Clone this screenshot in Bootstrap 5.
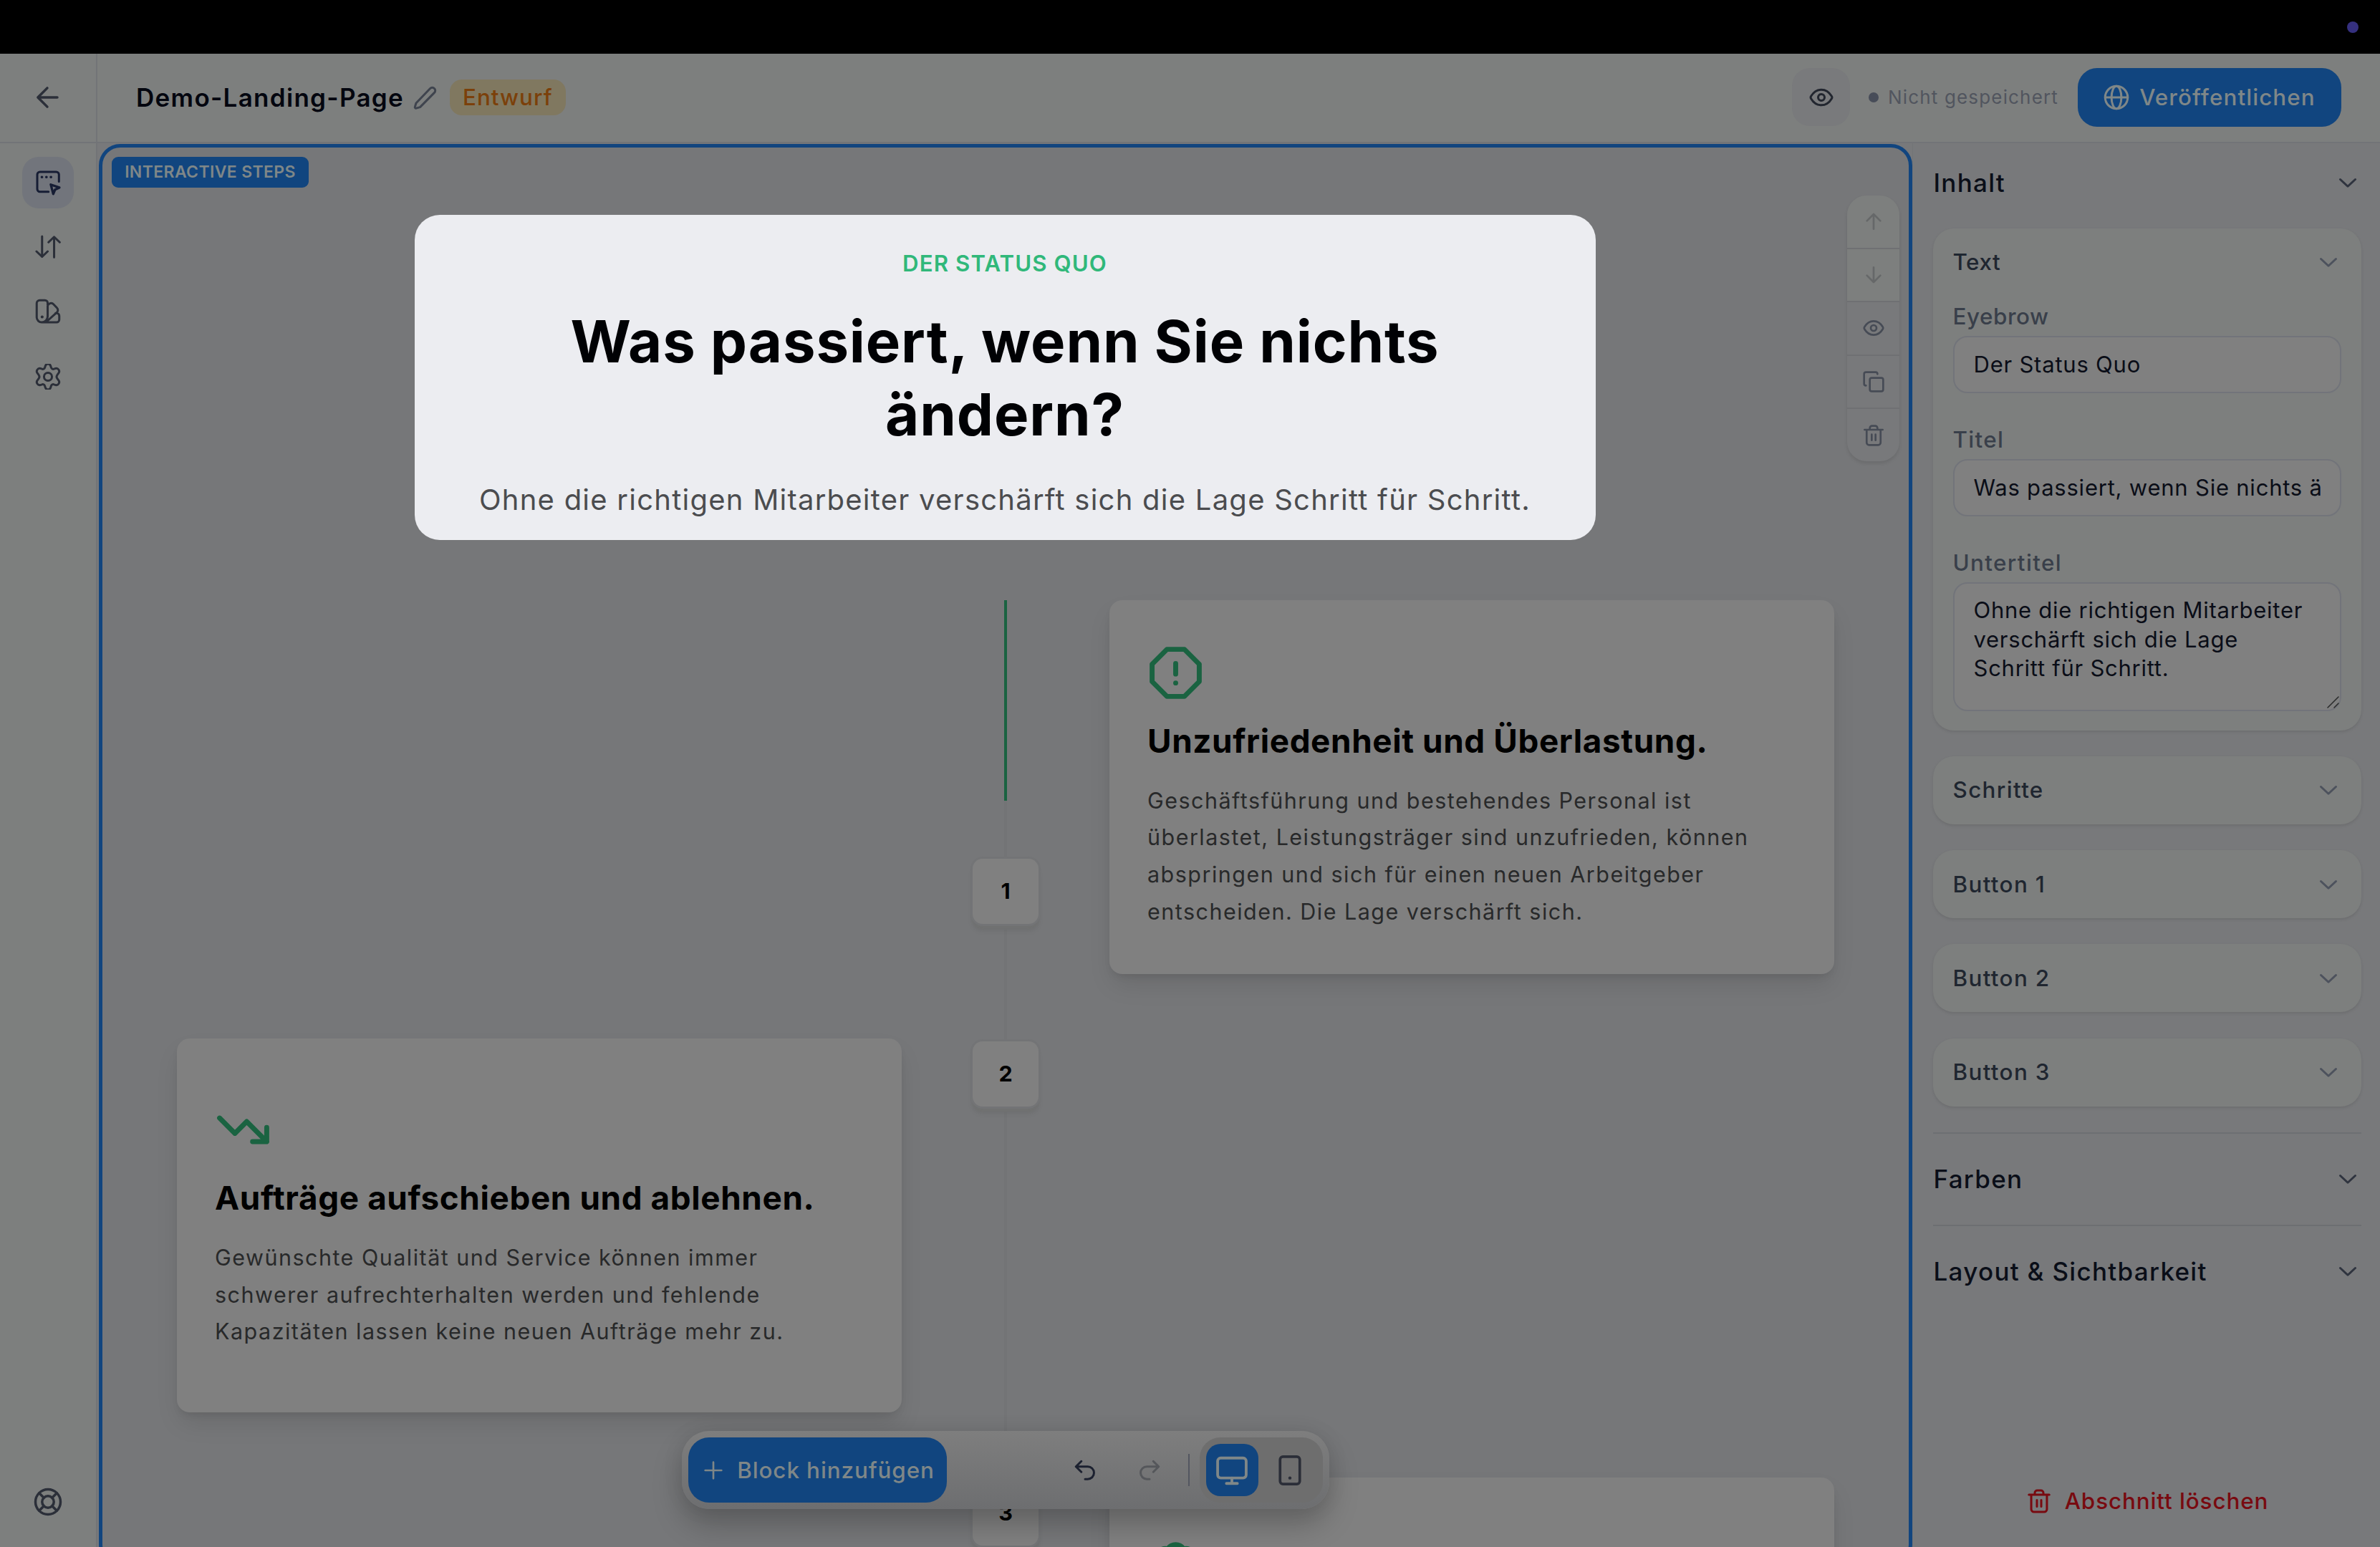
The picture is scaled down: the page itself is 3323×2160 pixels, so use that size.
<!DOCTYPE html>
<html lang="de">
<head>
<meta charset="utf-8">
<meta name="viewport" content="width=device-width, initial-scale=1">
<title>Demo-Landing-Page</title>
<link href="https://cdn.jsdelivr.net/npm/bootstrap@5.3.0/dist/css/bootstrap.min.css" rel="stylesheet">
<script src="https://cdn.jsdelivr.net/npm/bootstrap@5.3.0/dist/js/bootstrap.bundle.min.js"></script>
<style>
  :root { --surface:#7d7f7e; --panel:#78797b; --stage:#767779; --edge:#727477; --blue:#11457f; --green:#1a6341; --on-blue:#7f8788; --ink:#2b2f39; }
  body { font-family:Inter,"Liberation Sans",sans-serif; height:2160px; width:3323px; background:var(--surface); color:#0a0d16; font-size:31.4px; line-height:40px; letter-spacing:1.2px; }
  svg { display:block; flex:none; fill:none; stroke:currentColor; stroke-width:2; stroke-linecap:round; stroke-linejoin:round; }
  .s31 { width:32px; height:32px; } .s36 { width:36px; height:36px; } .s42 { width:42px; height:42px; } .s79 { width:79px; height:79px; stroke-width:2.1; }
  .strip { height:75px; background:#000; padding-right:30px; }
  .strip i { width:16px; height:16px; border-radius:50%; background:#35307f; }
  .topbar { height:125px; border-bottom:2px solid var(--edge); }
  .topbar > :not(.backcell) { margin-bottom:2px; }
  .backcell, .rail { width:136px; border-right:2px solid var(--edge); color:var(--ink); }
  .backcell { padding:0 2px 2px 0; }
  .rail { padding:19px 1px 42px 0; gap:18.2px; }
  .railbtn { width:72px; height:72px; border-radius:23px; }
  .railbtn.on { background:#72757c; color:#161d34; }
  .pagetitle { font-size:35px; font-weight:600; letter-spacing:1.3px; color:#04060f; margin:0 12px 0 54px; }
  .draft { height:50px; line-height:50px; padding:0 18px; border-radius:17px; background:#807860; color:#7b400a; font-weight:530; letter-spacing:1px; margin-left:16px; }
  .eyebtn { width:81px; height:81px; border-radius:25px; background:#797a7c; color:#22262f; }
  .unsaved { font-size:26px; color:#51555e; margin:0 27px 0 26px; gap:13px; letter-spacing:1.16px; }
  .unsaved i { width:14px; height:14px; border-radius:50%; background:#474c58; }
  .bluebtn { background:var(--blue); color:var(--on-blue); font-weight:530; border-radius:27px; }
  .publish { width:368px; height:82px; margin-right:54px; gap:14px; letter-spacing:1.08px; }
  .stage { width:2534px; padding:1px 0 0 2px; background:var(--panel); }
  .frame { width:2532px; height:1985px; border:5px solid var(--blue); border-radius:30px; background:var(--stage); padding-top:93.5px; }
  .blocktag { left:13px; top:13px; width:275px; height:43px; line-height:43px; border-radius:9px; background:var(--blue); color:var(--on-blue); font-size:23px; font-weight:600; letter-spacing:.36px; }
  .spot { width:1649px; height:454px; border-radius:35px; background:#ecedf1; padding-top:48px; color:#000104; position:relative; left:-1px; }
  .spot-eyebrow { color:#30b87a; font-size:31.2px; font-weight:600; letter-spacing:1.1px; }
  .spot h1 { font-size:81.4px; line-height:101.7px; font-weight:700; letter-spacing:.87px; margin:38.5px 0 38.5px; }
  .spot p { font-size:40px; line-height:60px; color:#4b4c4f; letter-spacing:1.24px; margin:0; }
  .steps { display:grid; grid-template-columns:1012px 290px 1012px; grid-auto-rows:522px; row-gap:90.4px; justify-content:center; margin-top:84.5px; }
  .rope { grid-column:2; grid-row:1 / span 3; width:4px; justify-self:center; background:linear-gradient(var(--green) 280px,#737476 280px); }
  .c1 { grid-column:1; } .c2 { grid-column:2; } .c3 { grid-column:3; } .r1 { grid-row:1; } .r2 { grid-row:2; } .r3 { grid-row:3; }
  .stepcard { background:#808080; border-radius:18px; padding:0 53px; box-shadow:0 18px 34px -4px rgba(0,0,0,.1),0 6px 12px -4px rgba(0,0,0,.1); color:var(--green); }
  .stepcard h2 { font-size:45.8px; line-height:60px; font-weight:700; letter-spacing:.62px; color:#000; margin:26px 0 27px; }
  .stepcard p { font-size:30.5px; line-height:51.7px; letter-spacing:1.48px; color:#28292a; margin:0; white-space:nowrap; }
  .num { width:92px; height:91px; line-height:90px; border-radius:14px; background:#808080; justify-self:center; font-size:30.5px; font-weight:700; color:#000; letter-spacing:0; box-shadow:0 0 0 3px #737476,0 7px 3px 1px #707171,0 10px 8px rgba(0,0,0,.06); margin:4px 0 0; }
  .num.r1 { margin-top:360.5px; }
  .tools { right:13px; top:67px; width:73px; height:371px; border-radius:27px; overflow:hidden; box-shadow:0 3px 5px rgba(0,0,0,.1); background:#78797b; color:#464b55; }
  .tools > span { height:74.5px; border-bottom:2px solid #6f7073; }
  .tools > span:last-child { border:0; height:73px; }
  .tools .off { background:var(--surface); color:#666869; }
  .dock { left:809px; top:1792px; width:904px; height:109px; border-radius:38px; padding:9px; background:linear-gradient(#7e7e7e,#6d6e70); box-shadow:0 22px 42px rgba(0,0,0,.22),0 0 30px rgba(0,0,0,.07); }
  .addblock { width:361px; height:91px; border-radius:29px; letter-spacing:.9px; gap:17px; padding-left:2px; }
  .dock .rule { width:2px; height:45px; background:#535660; }
  .seg { width:172px; height:91px; border-radius:29px; background:#6e6e6e; padding-left:8.5px; margin-left:14px; color:#2b2e38; }
  .seg .on { width:73px; height:73px; border-radius:20px; background:var(--blue); color:var(--on-blue); margin-right:22px; }
  .side { width:653px; background:var(--panel); padding:0 26.5px 44px 27.5px; border-left:1px solid var(--edge); }
  .sec { font-size:35px; font-weight:530; letter-spacing:1.3px; height:128.7px; color:#0a0e18; padding-left:1px; }
  .sec svg { color:#2f343f; margin-right:1px; }
  .sec.first { height:109.500px; margin-bottom:9px; }
  .rule-top { border-top:2px solid #6d6f72; }
  .fold { background:var(--surface); border-radius:29px; box-shadow:0 2px 4px rgba(0,0,0,.1); margin-bottom:36.3px; padding:0 28px; color:#1f2630; }
  .foldhead { height:95px; font-weight:530; letter-spacing:1.35px; }
  .foldhead svg { color:#4d525d; }
  .flabel { font-weight:530; color:#393f4a; height:40px; margin-bottom:7px; letter-spacing:1.35px; display:block; }
  .tight { letter-spacing:.55px; }
  .side .form-control { background:#808080; border:2px solid #72747a; border-radius:20px; height:80px; padding:0 27px; font-size:31px; line-height:40.7px; letter-spacing:.78px; color:#0a0d17; margin-bottom:45px; }
  .side textarea.form-control { height:180px; padding-top:17.5px; padding-right:45px; resize:none; overflow:hidden; margin-bottom:0; letter-spacing:.74px; }
  .grip { right:2px; bottom:3px; width:20px; height:20px; stroke-width:1.6; color:#2c2d2e; }
  .remove { color:#780a10; font-weight:530; letter-spacing:.9px; gap:18px; padding-left:1px; }
</style>
</head>
<body class="d-flex flex-column overflow-hidden">
  <svg width="0" height="0" class="position-absolute">
    <symbol id="chev" viewBox="0 0 24 24"><path d="m5 9 7 6.500 7-6.500"/></symbol>
    <symbol id="eye" viewBox="0 0 24 24"><path d="M2.400 13.100a2 2 0 0 1 0-2.200C4.500 7.400 8 4.800 12 4.800s7.500 2.600 9.600 6.100a2 2 0 0 1 0 2.200c-2.100 3.500-5.600 6.100-9.600 6.100s-7.500-2.600-9.600-6.100Z"/><circle cx="12" cy="12" r="3"/></symbol>
    <symbol id="bin" viewBox="0 0 24 24"><path d="M2.500 6h19M4.700 6v13.500a2.500 2.500 0 0 0 2.500 2.500h9.600a2.500 2.500 0 0 0 2.500-2.500V6M8 6V4.300A2.300 2.300 0 0 1 10.300 2h3.400A2.300 2.300 0 0 1 16 4.300V6M10 11v6M14 11v6"/></symbol>
  </svg>

  <div class="strip d-flex align-items-center justify-content-end flex-shrink-0"><i></i></div>

  <header class="topbar d-flex align-items-center flex-shrink-0">
    <div class="backcell h-100 d-flex align-items-center justify-content-center">
      <svg class="s42" viewBox="0 0 24 24"><path d="M20 12H4.500M12 4.500 4.500 12l7.500 7.500"/></svg>
    </div>
    <div class="pagetitle">Demo-Landing-Page</div>
    <svg class="s36" viewBox="0 0 24 24" style="color:#3f444e"><path d="M3.300 17.300 16.400 3.700a2.700 2.700 0 0 1 3.900 0 2.700 2.700 0 0 1 0 3.900L7 21.100l-3.600 1a1 1 0 0 1-1.200-1.200Z"/></svg>
    <span class="draft">Entwurf</span>
    <div class="ms-auto d-flex align-items-center">
      <span class="eyebtn d-flex align-items-center justify-content-center"><svg class="s36"><use href="#eye"/></svg></span>
      <span class="unsaved d-flex align-items-center"><i></i>Nicht gespeichert</span>
      <span class="bluebtn publish d-flex align-items-center justify-content-center">
        <svg class="s36" viewBox="0 0 24 24"><circle cx="12" cy="12" r="10.500"/><ellipse cx="12" cy="12" rx="4.600" ry="10.500"/><path d="M1.500 12h21"/></svg>Veröffentlichen</span>
    </div>
  </header>

  <main class="d-flex flex-grow-1 overflow-hidden">
    <nav class="rail d-flex flex-column align-items-center flex-shrink-0">
      <span class="railbtn on d-flex align-items-center justify-content-center">
        <svg class="s36" viewBox="0 0 24 24"><path d="M12.500 20.500H4.500a2.500 2.500 0 0 1-2.500-2.500V4.500A2.500 2.500 0 0 1 4.500 2h15.200A2.500 2.500 0 0 1 22.200 4.500V11"/><path d="M6.300 6.800h.1M10.500 6.800h.1M14.700 6.800h.1" stroke-width="2.400"/><path d="m14.600 13.800 8 2.800-4 1.900-1.700 4Z" stroke-width="2.200"/></svg>
      </span>
      <span class="railbtn d-flex align-items-center justify-content-center">
        <svg class="s36" viewBox="0 0 24 24"><path d="M6.500 2v19M1.300 16l5.200 5 5.200-5M17.700 21.500V2.500M12.500 7.500l5.200-5 5.200 5"/></svg>
      </span>
      <span class="railbtn d-flex align-items-center justify-content-center">
        <svg class="s36" viewBox="0 0 24 24"><path d="M4.200 1.500h5a2.500 2.500 0 0 1 2.500 2.500v12.500a5.500 5.500 0 0 1-5.500 5.500A4.700 4.700 0 0 1 1.500 17.500V4.200a2.700 2.700 0 0 1 2.700-2.700ZM11.700 6l1.200-1a3 3 0 0 1 4.200.2l3.200 3.300a3 3 0 0 1 0 4.300L10 22M19 13.500h1a2.500 2.500 0 0 1 2.500 2.500v3.500a2.500 2.500 0 0 1-2.500 2.500H6.200"/><path d="M6.500 17h.1" stroke-width="2.600"/></svg>
      </span>
      <span class="railbtn d-flex align-items-center justify-content-center">
        <svg class="s36" viewBox="0 0 24 24"><circle cx="12" cy="12" r="3.700"/><path d="M9.600 1.800 C10.500-.6 13.500-.6 14.400 1.800L15 3.600a2 2 0 0 0 2.600 1.200l1.500-.5c2.400-.6 4.300 2.400 2.800 4.300l-1.100 1.500a3 3 0 0 0 0 3.800l1.100 1.500c1.500 1.900-.4 4.900-2.800 4.300l-1.500-.5A2 2 0 0 0 15 20.400l-.6 1.800c-.9 2.400-3.900 2.400-4.800 0L9 20.400a2 2 0 0 0-2.600-1.200l-1.500.5c-2.400.6-4.300-2.400-2.800-4.300l1.100-1.500a3 3 0 0 0 0-3.800L2.100 8.600C.6 6.700 2.500 3.700 4.900 4.300l1.500.5A2 2 0 0 0 9 3.600Z"/></svg>
      </span>
      <svg class="s42 mt-auto" viewBox="0 0 24 24"><circle cx="12" cy="12" r="10"/><circle cx="12" cy="12" r="4.700"/><path d="m5 5 3.700 3.700M15.300 8.700 19 5M15.300 15.300 19 19M8.700 15.300 5 19"/></svg>
    </nav>

    <div class="stage flex-shrink-0">
      <section class="frame position-relative">
        <span class="blocktag position-absolute text-center">INTERACTIVE STEPS</span>

        <div class="spot mx-auto text-center">
          <div class="spot-eyebrow">DER STATUS QUO</div>
          <h1>Was passiert, wenn Sie nichts<br>ändern?</h1>
          <p>Ohne die richtigen Mitarbeiter verschärft sich die Lage Schritt für Schritt.</p>
        </div>

        <div class="steps">
          <div class="rope"></div>
          <div class="num c2 r1 text-center">1</div>
          <article class="stepcard c3 r1 d-flex flex-column justify-content-center">
            <svg class="s79" viewBox="0 0 24 24"><path d="M8.300 2h7.400L22 8.300v7.400L15.700 22H8.300L2 15.700V8.300ZM12 8v4.500M12 16.300h.01"/></svg>
            <h2>Unzufriedenheit und Überlastung.</h2>
            <p>Geschäftsführung und bestehendes Personal ist<br>überlastet, Leistungsträger sind unzufrieden, können<br>abspringen und sich für einen neuen Arbeitgeber<br>entscheiden. Die Lage verschärft sich.</p>
          </article>
          <article class="stepcard c1 r2 d-flex flex-column justify-content-center">
            <svg class="s79" viewBox="0 0 24 24"><path d="M22 17l-8.500-8.500-5 5L2 7M16 17h6v-6"/></svg>
            <h2>Aufträge aufschieben und ablehnen.</h2>
            <p>Gewünschte Qualität und Service können immer<br>schwerer aufrechterhalten werden und fehlende<br>Kapazitäten lassen keine neuen Aufträge mehr zu.</p>
          </article>
          <div class="num c2 r2 text-center">2</div>
          <div class="num c2 r3 text-center">3</div>
          <article class="stepcard c3 r3">
            <svg class="s79" style="margin-top:87px" viewBox="0 0 24 24"><path d="M3.850 8.620a4 4 0 0 1 4.780-4.770 4 4 0 0 1 6.740 0 4 4 0 0 1 4.780 4.780 4 4 0 0 1 0 6.740 4 4 0 0 1-4.770 4.780 4 4 0 0 1-6.750 0 4 4 0 0 1-4.780-4.770 4 4 0 0 1 0-6.760Z"/></svg>
          </article>
        </div>

        <div class="tools position-absolute d-flex flex-column">
          <span class="off d-flex align-items-center justify-content-center"><svg class="s31" viewBox="0 0 24 24"><path d="M12 20V4.500M5 11.500l7-7 7 7"/></svg></span>
          <span class="off d-flex align-items-center justify-content-center"><svg class="s31" viewBox="0 0 24 24"><path d="M12 4v15.500M5 12.500l7 7 7-7"/></svg></span>
          <span class="d-flex align-items-center justify-content-center"><svg class="s31"><use href="#eye"/></svg></span>
          <span class="d-flex align-items-center justify-content-center"><svg class="s31" viewBox="0 0 24 24"><rect x="8" y="8" width="14" height="14" rx="2"/><path d="M4 16c-1.100 0-2-.9-2-2V4c0-1.100.9-2 2-2h10c1.100 0 2 .9 2 2"/></svg></span>
          <span class="d-flex align-items-center justify-content-center"><svg class="s31"><use href="#bin"/></svg></span>
        </div>

        <div class="dock position-absolute d-flex align-items-center">
          <span class="bluebtn addblock d-flex align-items-center justify-content-center">
            <svg class="s31" viewBox="0 0 24 24"><path d="M12 3.500v17M3.500 12h17"/></svg>Block hinzufügen</span>
          <svg style="width:36px;height:36px;margin-left:175px;color:#1c2130" viewBox="0 0 24 24"><path d="M8.500 13.500 3.500 8.500l5-5M3.500 8.500h11a5.800 5.800 0 0 1 0 11.600H12"/></svg>
          <svg style="width:36px;height:36px;margin-left:54px;color:#55575b" viewBox="0 0 24 24"><path d="m15.500 13.500 5-5-5-5M20.500 8.500h-11a5.800 5.800 0 0 0 0 11.600H12"/></svg>
          <i class="rule ms-auto"></i>
          <div class="seg d-flex align-items-center">
            <span class="on d-flex align-items-center justify-content-center"><svg style="width:46px;height:46px" viewBox="0 0 24 24"><rect x="1.600" y="3" width="20.800" height="14.500" rx="2.200"/><path d="M12 17.500v4M8 21.500h8"/></svg></span>
            <svg style="width:44px;height:44px" viewBox="0 0 24 24"><rect x="4.500" y="1.600" width="15" height="20.800" rx="2.200"/><path d="M12 17.800h.01" stroke-width="2.400"/></svg>
          </div>
        </div>
      </section>
    </div>

    <aside class="side d-flex flex-column flex-shrink-0">
      <div class="sec first d-flex align-items-center justify-content-between">Inhalt<svg class="s36"><use href="#chev"/></svg></div>
      <div class="fold" style="padding-bottom:27px">
        <div class="foldhead tight d-flex align-items-center justify-content-between">Text<svg class="s36"><use href="#chev"/></svg></div>
        <div style="padding-top:8px">
          <label class="flabel tight">Eyebrow</label>
          <input class="form-control" value="Der Status Quo">
          <label class="flabel">Titel</label>
          <input class="form-control" value="Was passiert, wenn Sie nichts ändern?">
          <label class="flabel">Untertitel</label>
          <div class="position-relative">
            <textarea class="form-control">Ohne die richtigen Mitarbeiter verschärft sich die Lage Schritt für Schritt.</textarea>
            <svg class="grip position-absolute" viewBox="0 0 20 20"><path d="M3 18 18 3M12 18l6-6"/></svg>
          </div>
        </div>
      </div>
      <div class="fold"><div class="foldhead d-flex align-items-center justify-content-between">Schritte<svg class="s36"><use href="#chev"/></svg></div></div>
      <div class="fold"><div class="foldhead d-flex align-items-center justify-content-between">Button 1<svg class="s36"><use href="#chev"/></svg></div></div>
      <div class="fold"><div class="foldhead d-flex align-items-center justify-content-between">Button 2<svg class="s36"><use href="#chev"/></svg></div></div>
      <div class="fold"><div class="foldhead d-flex align-items-center justify-content-between">Button 3<svg class="s36"><use href="#chev"/></svg></div></div>
      <div class="sec rule-top d-flex align-items-center justify-content-between">Farben<svg class="s36"><use href="#chev"/></svg></div>
      <div class="sec rule-top d-flex align-items-center justify-content-between">Layout &amp; Sichtbarkeit<svg class="s36"><use href="#chev"/></svg></div>
      <div class="remove mt-auto d-flex align-items-center justify-content-center"><svg class="s36"><use href="#bin"/></svg>Abschnitt löschen</div>
    </aside>
  </main>
</body>
</html>
